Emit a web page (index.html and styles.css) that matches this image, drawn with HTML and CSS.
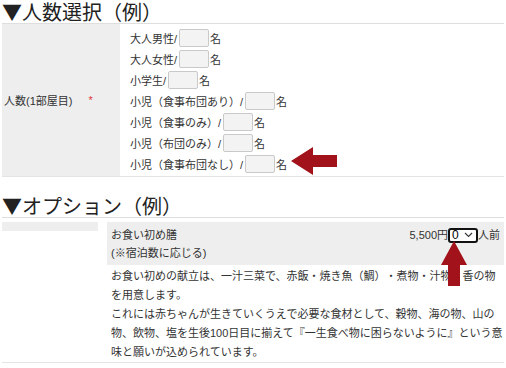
FILE: index.html
```html
<!DOCTYPE html>
<html lang="ja">
<head>
<meta charset="utf-8">
<title>人数選択</title>
<link rel="stylesheet" href="styles.css">
</head>
<body>
<h2 class="sec-title">▼人数選択（例）</h2>
<div class="people">
  <div class="people-label">人数(1部屋目)<span class="req">*</span></div>
  <div class="people-fields">
    <div class="count-row">大人男性/<input class="count-input" type="text">名</div>
    <div class="count-row">大人女性/<input class="count-input" type="text">名</div>
    <div class="count-row">小学生/<input class="count-input" type="text">名</div>
    <div class="count-row">小児（食事布団あり）/<input class="count-input" type="text">名</div>
    <div class="count-row">小児（食事のみ）/<input class="count-input" type="text">名</div>
    <div class="count-row">小児（布団のみ）/<input class="count-input" type="text">名</div>
    <div class="count-row">小児（食事布団なし）/<input class="count-input" type="text">名</div>
  </div>
</div>

<h2 class="sec-title second">▼オプション（例）</h2>
<div class="options">
  <div class="opt-side"></div>
  <div class="opt-main">
    <div class="opt-head">
      <div class="opt-name">お食い初め膳<br>(※宿泊数に応じる)</div>
      <div class="opt-price">5,500円<span class="qty"><span class="qty-val">0</span><svg class="qty-caret" width="9" height="6" viewBox="0 0 9 6"><path d="M1 1 L4.5 4.5 L8 1" fill="none" stroke="#333" stroke-width="1.1"/></svg></span>人前</div>
    </div>
    <div class="opt-desc">
      <p>お食い初めの献立は、一汁三菜で、赤飯・焼き魚（鯛）・煮物・汁物・香の物を用意します。</p>
      <p>これには赤ちゃんが生きていくうえで必要な食材として、穀物、海の物、山の物、飲物、塩を生後100日目に揃えて『一生食べ物に困らないように』という意味と願いが込められています。</p>
    </div>
  </div>
</div>

<svg class="arrows" width="506" height="368" viewBox="0 0 506 368">
  <polygon points="291,161 313,147 313,155 337,155 337,167 313,167 313,175" fill="#a1121b"/>
  <polygon points="454,241 467,265 460,265 460,286 448,286 448,265 441,265" fill="#a1121b"/>
</svg>
</body>
</html>
```

FILE: styles.css
```css
* { box-sizing: border-box; }
html, body { margin: 0; padding: 0; background: #fff; }
body {
  position: relative;
  width: 506px;
  height: 368px;
  overflow: hidden;
  padding: 0 2px;
  font-family: "Liberation Sans", "Noto Sans CJK JP", sans-serif;
  font-size: 11px;
  color: #333;
}
.sec-title {
  margin: 0;
  padding-top: 1px;
  height: 23px;
  font-family: "Noto Sans CJK JP", sans-serif;
  font-size: 20px;
  font-weight: 400;
  line-height: 22px;
  color: #222;
  white-space: nowrap;
}
.sec-title.second { margin-top: 17px; }

.people {
  display: flex;
  border-top: 1px solid #dedede;
  border-bottom: 1px solid #e4e4e4;
}
.people-label {
  width: 118px;
  background: #eeeeee;
  display: flex;
  align-items: center;
  padding-left: 2px;
}
.req { color: #e0383e; margin-left: 16px; }
.people-fields {
  flex: 1;
  padding: 3px 0 2px 10px;
}
.count-row {
  height: 21px;
  display: flex;
  align-items: center;
  white-space: nowrap;
}
.count-input {
  width: 30px;
  height: 18px;
  margin: 0 1px 0 2px;
  padding: 0;
  border: 1px solid #c9c9c9;
  border-radius: 2px;
  background: #f3f3f3;
}

.options {
  display: flex;
  gap: 9px;
  padding-top: 4px;
  border-top: 1px solid #dedede;
  border-bottom: 1px solid #e4e4e4;
}
.opt-side {
  width: 96px;
  height: 9px;
  background: #eeeeee;
}
.opt-main { flex: 1; min-width: 0; }
.opt-head {
  display: flex;
  justify-content: space-between;
  align-items: flex-start;
  background: #eeeeee;
  padding: 4px 4px 3px;
  line-height: 18px;
}
.opt-price {
  display: flex;
  align-items: center;
  height: 18px;
  white-space: nowrap;
}
.qty {
  display: inline-flex;
  align-items: center;
  justify-content: space-between;
  width: 30px;
  height: 15px;
  padding: 0 3px 0 2px;
  border: 2px solid #111;
  border-radius: 3px;
  background: #fff;
  color: #000;
  font-size: 12px;
  line-height: 11px;
}
.opt-desc {
  margin-right: -2px;
  padding: 2px 0 0 4px;
  line-height: 19px;
  text-autospace: no-autospace;
  text-spacing-trim: space-all;
}
.opt-desc p { margin: 0; }

.arrows {
  position: absolute;
  left: 0;
  top: 0;
  pointer-events: none;
}
```
